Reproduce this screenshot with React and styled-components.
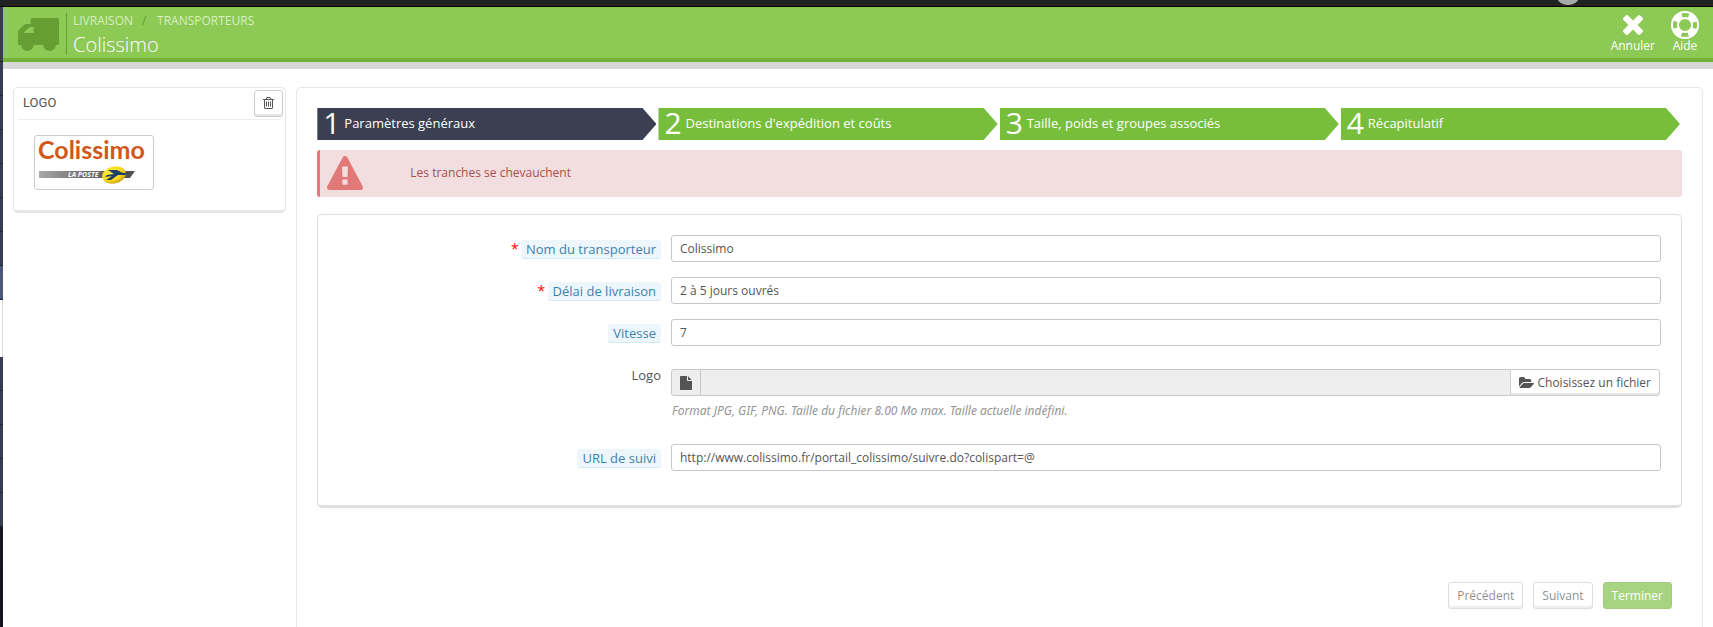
import { useState } from "react";
import styled, { createGlobalStyle, css } from "styled-components";

// FontAwesome 4 glyphs, drawn y-up like in the font
const GLYPHS = {
  truck: {
    box: "0 -1280 1664 1408",
    d: "M640 128q0-52-38-90t-90-38-90 38-38 90 38 90 90 38 90-38 38-90zM256 640h384v256h-158q-13 0-22-9l-195-195q-9-9-9-22v-30zM1536 128q0-52-38-90t-90-38-90 38-38 90 38 90 90 38 90-38 38-90zM1664 1216v-1024q0-15-4-26.5t-13.5-18.5-16.5-11.5-23.5-6-22.5-2-25.5 0-22.5 0.5q0-106-75-181t-181-75-181 75-75 181h-384q0-106-75-181t-181-75-181 75-75 181h-64q-3 0-22.5-0.5t-25.5 0-22.5 2-23.5 6-16.5 11.5-13.5 18.5-4 26.5q0 26 19 45t45 19v320q0 8-0.5 35t0 38 2.5 34.5 6.5 37 14 30.5 22.5 30l198 198q19 19 50.5 32t58.5 13h160v192q0 26 19 45t45 19h1024q26 0 45-19t19-45z",
  },
  times: {
    box: "110 -1170 1188 1188",
    d: "M1298 214q0-40-28-68l-136-136q-28-28-68-28t-68 28l-294 294-294-294q-28-28-68-28t-68 28l-136 136q-28 28-28 68t28 68l294 294-294 294q-28 28-28 68t28 68l136 136q28 28 68 28t68-28l294-294 294 294q28 28 68 28t68-28l136-136q28-28 28-68t-28-68l-294-294 294-294q28-28 28-68z",
  },
  warning: {
    box: "0 -1536 1792 1664",
    d: "M1024 161v190q0 14-9.5 23.5t-22.5 9.5h-192q-13 0-22.5-9.5t-9.5-23.5v-190q0-14 9.5-23.5t22.5-9.5h192q13 0 22.5 9.5t9.5 23.5zM1022 535l18 459q0 12-10 19-13 11-24 11h-220q-11 0-24-11-10-7-10-21l17-457q0-10 10-16.5t24-6.5h185q14 0 23.5 6.5t10.5 16.5zM1008 1469l768-1408q35-63-2-126-17-29-46.5-46t-63.5-17h-1536q-34 0-63.5 17t-46.5 46q-37 63-2 126l768 1408q17 31 47 49t65 18 65-18 47-49z",
  },
  file: {
    box: "0 -1536 1536 1792",
    d: "M1024 1024v472q22-14 36-28l408-408q14-14 28-36h-472zM896 992q0-40 28-68t68-28h544v-1056q0-40-28-68t-68-28h-1344q-40 0-68 28t-28 68v1600q0 40 28 68t68 28h800v-544z",
  },
  folder: {
    box: "0 -1408 1879 1408",
    d: "M1879 584q0-31-31-66l-336-396q-43-51-120.5-86.5t-143.5-35.5h-1088q-34 0-60.5 13t-26.5 43q0 31 31 66l336 396q43 51 120.5 86.5t143.5 35.5h1088q34 0 60.5-13t26.5-43zM1536 928v-160h-832q-94 0-197-47.5t-164-119.5l-337-396-5-6q0 4-0.5 12.5t-0.5 12.5v960q0 92 66 158t158 66h320q92 0 158-66t66-158v-32h544q92 0 158-66t66-158z",
  },
  trash: {
    box: "0 -1408 1408 1536",
    d: "M512 800v-576q0-14-9-23t-23-9h-64q-14 0-23 9t-9 23v576q0 14 9 23t23 9h64q14 0 23-9t9-23zM768 800v-576q0-14-9-23t-23-9h-64q-14 0-23 9t-9 23v576q0 14 9 23t23 9h64q14 0 23-9t9-23zM1024 800v-576q0-14-9-23t-23-9h-64q-14 0-23 9t-9 23v576q0 14 9 23t23 9h64q14 0 23-9t9-23zM1152 76v948h-896v-948q0-22 7-40.5t14.5-27 10.5-8.5h832q3 0 10.5 8.5t14.5 27 7 40.5zM480 1152h448l-48 117q-7 9-17 11h-317q-10-2-17-11zM1408 1120v-64q0-14-9-23t-23-9h-96v-948q0-83-47-143.5t-113-60.5h-832q-66 0-113 58.5t-47 141.5v952h-96q-14 0-23 9t-9 23v64q0 14 9 23t23 9h309l70 167q15 37 54 63t79 26h320q40 0 79-26t54-63l70-167h309q14 0 23-9t9-23z",
  },
};

function Glyph({ name, width, height }) {
  const { box, d } = GLYPHS[name];
  return (
    <svg
      width={width}
      height={height}
      viewBox={box}
      preserveAspectRatio="none"
      fill="currentColor"
      aria-hidden="true"
    >
      <path transform="scale(1 -1)" d={d} />
    </svg>
  );
}

function LifeRing() {
  return (
    <svg width="28" height="28" viewBox="0 0 28 28" fill="none" aria-hidden="true">
      <circle cx="14" cy="14" r="13" stroke="#fff" strokeWidth="2" />
      <circle cx="14" cy="14" r="7" stroke="#fff" strokeWidth="2" />
      <circle
        cx="14"
        cy="14"
        r="10"
        stroke="#fff"
        strokeWidth="6"
        strokeDasharray="8.85 6.86"
        strokeDashoffset="-3.43"
      />
    </svg>
  );
}

function ColissimoLogo() {
  return (
    <LogoSvg width="110" height="46" viewBox="0 0 110 46" role="img" aria-label="Colissimo La Poste">
      <defs>
        <linearGradient id="band" x1="0" x2="1" y1="0" y2="0">
          <stop offset="0" stopColor="#a8a8a8" />
          <stop offset="0.5" stopColor="#6c6c6e" />
          <stop offset="1" stopColor="#4c4d50" />
        </linearGradient>
        <radialGradient id="sun" cx="0.4" cy="0.35" r="0.65">
          <stop offset="0" stopColor="#fff04a" />
          <stop offset="0.7" stopColor="#f9d71a" />
          <stop offset="1" stopColor="#c9a414" />
        </radialGradient>
      </defs>
      <text x="-1" y="19" fontFamily="Lato, sans-serif" fontWeight="700" fontSize="25" fill="#d2581a">
        Colissimo
      </text>
      <path d="M0 31h96l-5 7H0z" fill="url(#band)" />
      <text
        x="29"
        y="37"
        fontFamily="Open Sans, sans-serif"
        fontWeight="700"
        fontStyle="italic"
        fontSize="7"
        fill="#fff"
      >
        LA POSTE
      </text>
      <ellipse cx="75" cy="35" rx="12" ry="8.5" fill="url(#sun)" transform="rotate(-12 75 35)" />
      <path d="M69 30h9l6 3h5l-3 2h-7l-7 5h-5l6-4-7 1 2-2 7-1z" fill="#1d3f66" />
    </LogoSvg>
  );
}

const STEPS = [
  "Paramètres généraux",
  "Destinations d'expédition et coûts",
  "Taille, poids et groupes associés",
  "Récapitulatif",
];

function TextField({ id, label, required, initialValue }) {
  const [value, setValue] = useState(initialValue);

  return (
    <FormRow>
      <LabelCell>
        {required && <Star>*</Star>}
        <HintLabel htmlFor={id}>{label}</HintLabel>
      </LabelCell>
      <TextInput id={id} value={value} onChange={(e) => setValue(e.target.value)} />
    </FormRow>
  );
}

function App() {
  const [step, setStep] = useState(0);

  return (
    <>
      <GlobalStyle />
      <Page>
        <TopBar>
          <Avatar />
        </TopBar>
        <Body>
          <Nav>
            <NavItem $first />
            {[1, 2, 3, 4, 5, 6].map((n) => (
              <NavItem key={n} />
            ))}
            <NavItem $current />
            <SubMenu />
            {[1, 2, 3, 4, 5].map((n) => (
              <NavItem key={n} />
            ))}
          </Nav>
          <Main>
            <PageHead>
              <HeadIcon>
                <Glyph name="truck" width={41} height={33} />
              </HeadIcon>
              <Titles>
                <Breadcrumb>
                  <a href="#livraison">LIVRAISON</a>
                  <Slash>/</Slash>
                  <a href="#transporteurs">TRANSPORTEURS</a>
                </Breadcrumb>
                <h1>Colissimo</h1>
              </Titles>
              <Toolbar>
                <ToolLink href="#annuler">
                  <ToolIcon>
                    <Glyph name="times" width={20} height={20} />
                  </ToolIcon>
                  Annuler
                </ToolLink>
                <ToolLink href="#aide">
                  <ToolIcon>
                    <LifeRing />
                  </ToolIcon>
                  Aide
                </ToolLink>
              </Toolbar>
            </PageHead>

            <Columns>
              <SideColumn>
                <Panel>
                  <PanelHead>
                    <h3>LOGO</h3>
                    <IconButton type="button" aria-label="Supprimer le logo">
                      <Glyph name="trash" width={11} height={12} />
                    </IconButton>
                  </PanelHead>
                  <Thumbnail>
                    <ColissimoLogo />
                  </Thumbnail>
                </Panel>
              </SideColumn>

              <WizardColumn>
                <Wizard>
                  <Steps>
                    {STEPS.map((title, i) => (
                      <li key={title}>
                        <Step type="button" $active={i === step} onClick={() => setStep(i)}>
                          <StepNumber>{i + 1}</StepNumber>
                          {title}
                        </Step>
                      </li>
                    ))}
                  </Steps>

                  <Alert role="alert">
                    <Glyph name="warning" width={36} height={34} />
                    Les tranches se chevauchent
                  </Alert>

                  <Form>
                    <TextField
                      id="name"
                      label="Nom du transporteur"
                      required
                      initialValue="Colissimo"
                    />
                    <TextField
                      id="delay"
                      label="Délai de livraison"
                      required
                      initialValue="2 à 5 jours ouvrés"
                    />
                    <TextField id="grade" label="Vitesse" initialValue="7" />
                    <FormRow>
                      <LabelCell>
                        <PlainLabel htmlFor="logo">Logo</PlainLabel>
                      </LabelCell>
                      <FileCell>
                        <FileGroup>
                          <Addon>
                            <Glyph name="file" width={12} height={14} />
                          </Addon>
                          <FileName id="logo" readOnly />
                          <FileButton type="button">
                            <Glyph name="folder" width={15} height={11} />
                            Choisissez un fichier
                          </FileButton>
                        </FileGroup>
                        <Help>
                          Format JPG, GIF, PNG. Taille du fichier 8.00 Mo max. Taille actuelle
                          indéfini.
                        </Help>
                      </FileCell>
                    </FormRow>
                    <TextField
                      id="url"
                      label="URL de suivi"
                      initialValue="http://www.colissimo.fr/portail_colissimo/suivre.do?colispart=@"
                    />
                  </Form>

                  <Actions>
                    <ActionButton type="button">Précédent</ActionButton>
                    <ActionButton type="button">Suivant</ActionButton>
                    <ActionButton type="button" $finish>
                      Terminer
                    </ActionButton>
                  </Actions>
                </Wizard>
              </WizardColumn>
            </Columns>
          </Main>
        </Body>
      </Page>
    </>
  );
}

const GlobalStyle = createGlobalStyle`
  * {
    box-sizing: border-box;
  }

  body {
    margin: 0;
    background: #fff;
    color: #555;
    font: 12px/17px "Open Sans", sans-serif;
  }

  h1, h3, p, ul {
    margin: 0;
    padding: 0;
    font-weight: 400;
  }

  ul {
    list-style: none;
  }

  a {
    color: inherit;
    text-decoration: none;
  }

  button, input {
    font: inherit;
    color: inherit;
  }

  button {
    cursor: pointer;
  }

  svg {
    display: block;
    flex: none;
  }
`;

const Page = styled.div`
  display: flex;
  flex-direction: column;
  height: 100vh;
  overflow: hidden;
`;

const TopBar = styled.header`
  flex: none;
  display: flex;
  justify-content: flex-end;
  align-items: flex-end;
  height: 7px;
  padding-right: 132px;
  background: #222;
  border-bottom: 1px solid #000;
`;

const Avatar = styled.span`
  width: 26px;
  height: 26px;
  margin-bottom: 1px;
  border-radius: 50%;
  background: #aaa;
`;

const Body = styled.div`
  flex: 1;
  display: flex;
  min-height: 0;
`;

const Nav = styled.nav`
  flex: none;
  width: 3px;
  background: linear-gradient(#20222c, #14151c);
`;

const NavItem = styled.div`
  height: ${({ $first }) => ($first ? 55 : 34)}px;
  background: ${({ $current }) => ($current ? "#4b5776" : "#363d50")};
  border-bottom: 1px solid #1f2432;
`;

const SubMenu = styled.div`
  height: 57px;
  background: #fff;
  border-right: 1px solid #ddd;
`;

const Main = styled.main`
  flex: 1;
  min-width: 0;
`;

const PageHead = styled.div`
  display: flex;
  height: 62px;
  padding: 5px 6px 0 15px;
  color: #fff;
  background: #8dc955;
  border-bottom: 7px solid #d8d8d8;
  box-shadow: inset 0 -4px #72b239;
`;

const HeadIcon = styled.div`
  height: 42px;
  margin-top: 1px;
  padding: 5px 7px 0 0;
  color: #659e31;
  border-right: 1px solid #659e31;
`;

const Titles = styled.div`
  padding-left: 6px;

  h1 {
    font-size: 20px;
    line-height: 32px;
    font-weight: 300;
  }
`;

const Breadcrumb = styled.nav`
  display: flex;
  font-size: 12px;
  line-height: 17px;
  color: #d8efc0;
`;

const Slash = styled.span`
  width: 24px;
  padding-left: 9px;
  color: #659e31;
`;

const Toolbar = styled.div`
  display: flex;
  gap: 8px;
  margin-left: auto;
`;

const ToolLink = styled.a`
  display: flex;
  flex-direction: column;
  align-items: center;
  min-width: 44px;
  line-height: 15px;
`;

const ToolIcon = styled.span`
  display: flex;
  align-items: center;
  height: 26px;
`;

const Columns = styled.div`
  display: flex;
  padding: 18px 5px 0;
`;

const SideColumn = styled.aside`
  width: 16.6666%;
  padding: 0 5px;
`;

const WizardColumn = styled.section`
  flex: 1;
  padding: 0 5px;
`;

const Panel = styled.div`
  height: 126px;
  padding: 0 4px;
  border: 1px solid #e6e6e6;
  border-bottom-width: 3px;
  border-radius: 5px;
`;

const PanelHead = styled.div`
  display: flex;
  justify-content: space-between;
  height: 32px;
  margin-bottom: 15px;
  border-bottom: 1px solid #eee;

  h3 {
    padding-left: 5px;
    font-family: Roboto, "Open Sans", sans-serif;
    font-size: 13px;
    line-height: 30px;
  }
`;

const buttonBase = css`
  background: #fff;
  border: 1px solid #ccc;
  border-radius: 3px;
  box-shadow: inset 0 -2px #e6e6e6;
`;

const IconButton = styled.button`
  ${buttonBase}
  display: flex;
  align-items: center;
  justify-content: center;
  width: 29px;
  height: 27px;
  margin: 2px -2px 0 0;
  padding: 0 0 1px;
`;

const Thumbnail = styled.div`
  width: 120px;
  height: 55px;
  margin-left: 16px;
  padding: 4px;
  border: 1px solid #ccc;
  border-radius: 3px;
`;

const LogoSvg = styled.svg`
  overflow: visible;
`;

const Wizard = styled.div`
  height: 560px;
  padding: 20px;
  border: 1px solid #e6e6e6;
  border-radius: 5px;
`;

const Steps = styled.ul`
  display: grid;
  grid-template-columns: repeat(4, 1fr);
  margin-bottom: 10px;

  li {
    padding-right: 2px;
  }
`;

const Step = styled.button`
  display: flex;
  align-items: center;
  width: 100%;
  height: 32px;
  padding: 0 20px 2px 6px;
  border: 0;
  color: #fff;
  font-size: 13px;
  background: ${({ $active }) => ($active ? "#3a3f51" : "#78be3d")};
  clip-path: polygon(0 0, calc(100% - 14px) 0, 100% 50%, calc(100% - 14px) 100%, 0 100%);
`;

const StepNumber = styled.span`
  width: 21px;
  text-align: left;
  font-size: 30px;
  line-height: 32px;
`;

const Alert = styled.div`
  display: flex;
  align-items: center;
  gap: 47px;
  height: 47px;
  margin-bottom: 17px;
  padding: 0 7px 2px;
  color: #a94f4f;
  background: #f2dede;
  border-left: 3px solid #e27979;
  border-radius: 3px;

  svg {
    color: #e27979;
  }
`;

const Form = styled.form`
  display: flex;
  flex-direction: column;
  gap: 15px;
  height: 294px;
  padding: 20px;
  border: 1px solid #ddd;
  border-bottom: 3px solid #e0e0e0;
  border-radius: 5px;
`;

const FormRow = styled.div`
  display: grid;
  grid-template-columns: calc(25% - 8px) minmax(0, 1fr);
  column-gap: 10px;
`;

const LabelCell = styled.div`
  display: flex;
  justify-content: flex-end;
  align-items: flex-start;
  padding-top: 5px;
  font-size: 13px;
  line-height: 18px;
`;

const Star = styled.span`
  width: 10px;
  color: #f00;
  font-size: 14px;
`;

const HintLabel = styled.label`
  padding: 0 5px;
  color: #4180ac;
  background: #edf7fb;
  border-bottom: 1px solid #d3eaf5;
  border-radius: 3px;
`;

const PlainLabel = styled.label`
  line-height: 18px;
`;

const TextInput = styled.input`
  width: 100%;
  height: 27px;
  padding: 0 8px;
  background: #fff;
  border: 1px solid #c7c7c7;
  border-radius: 3px;
`;

const FileCell = styled.div`
  padding: 8px 0 10px;
`;

const FileGroup = styled.div`
  display: flex;
  height: 27px;
  padding-right: 1px;
`;

const Addon = styled.span`
  display: flex;
  align-items: center;
  justify-content: center;
  width: 30px;
  background: #eee;
  border: 1px solid #c7c7c7;
  border-radius: 3px 0 0 3px;
`;

const FileName = styled.input`
  flex: 1;
  min-width: 0;
  background: #eee;
  border: 1px solid #c7c7c7;
  border-width: 1px 0;
`;

const FileButton = styled.button`
  ${buttonBase}
  display: flex;
  align-items: center;
  gap: 3px;
  padding: 0 8px;
  border-radius: 0 3px 3px 0;
`;

const Help = styled.p`
  padding: 6px 0 0 1px;
  color: #959595;
  font-family: "Noto Sans", "Open Sans", sans-serif;
  font-style: italic;
`;

const Actions = styled.div`
  display: flex;
  justify-content: flex-end;
  gap: 10px;
  padding: 74px 10px 0;
`;

const ActionButton = styled.button`
  ${buttonBase}
  height: 27px;
  padding: 0 8px;
  opacity: 0.65;
  ${({ $finish }) =>
    $finish &&
    css`
      color: #fff;
      background: #78be3d;
      border-color: #72b239;
      box-shadow: none;
    `}
`;

export default App;
